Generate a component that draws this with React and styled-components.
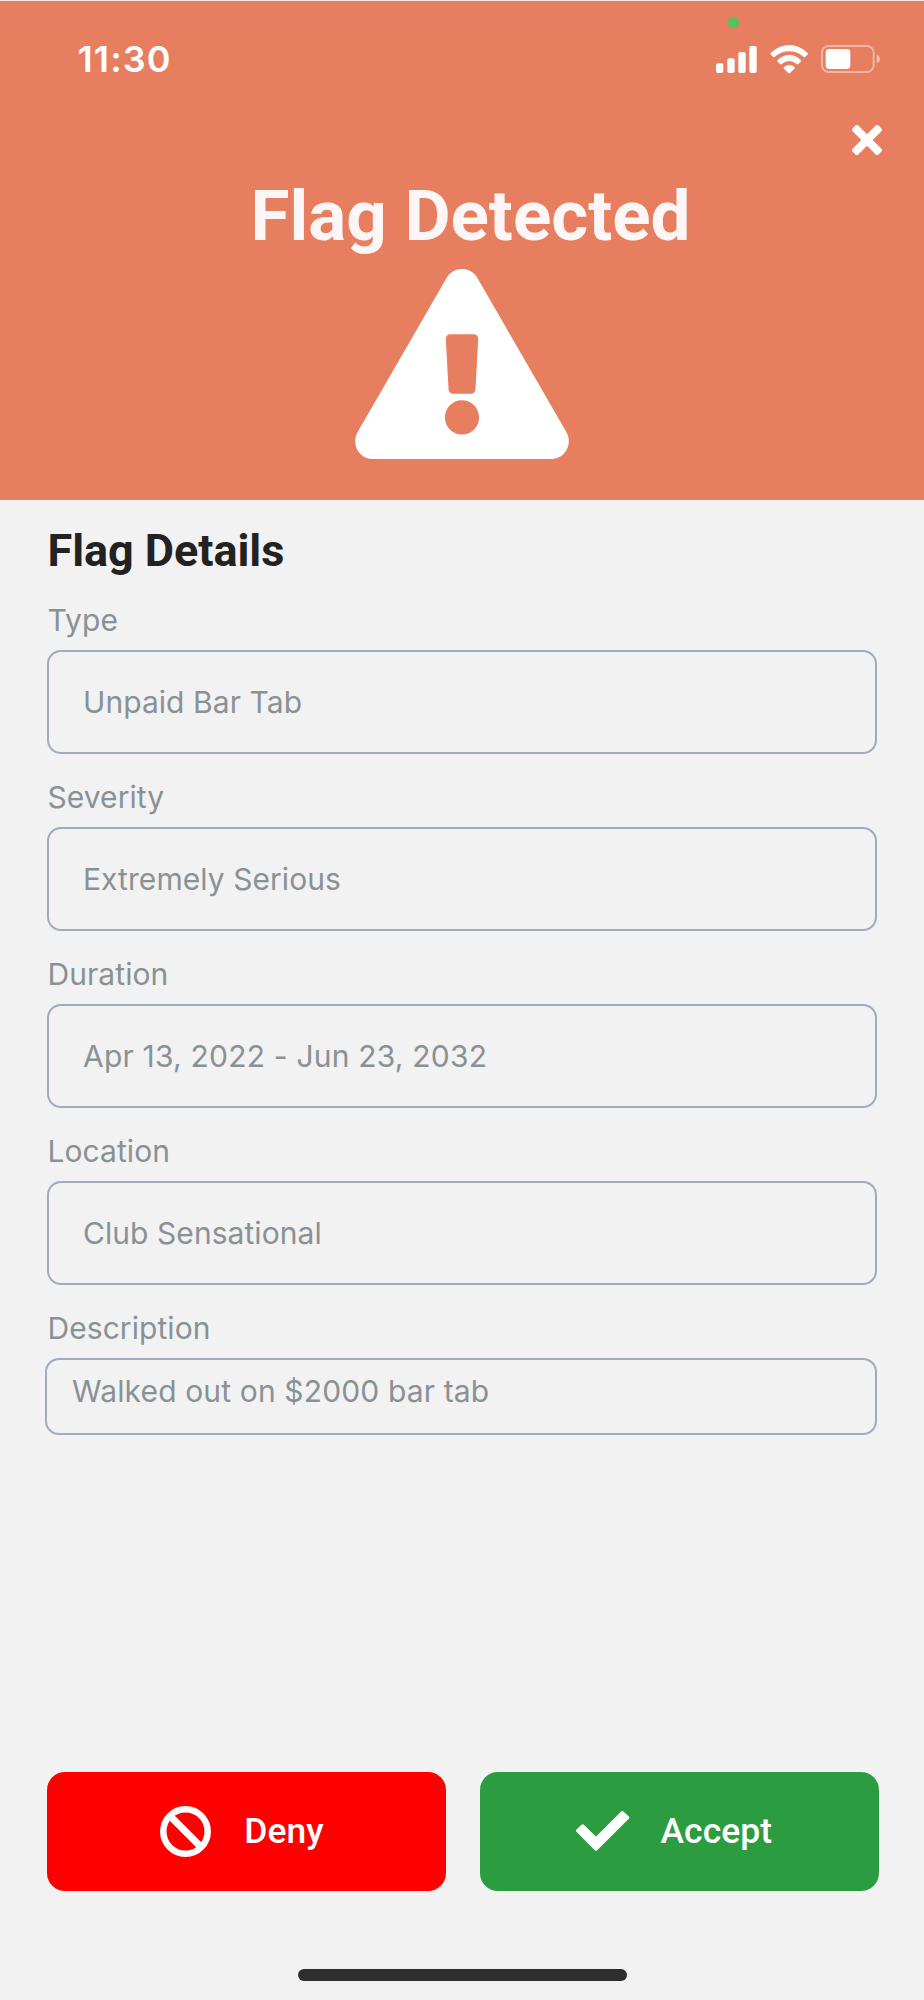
import React from "react";
import styled, { createGlobalStyle } from "styled-components";
import { FaExclamationTriangle } from "react-icons/fa";

const details = [
  { label: "Type", value: "Unpaid Bar Tab" },
  { label: "Severity", value: "Extremely Serious" },
  {
    label: "Duration",
    value: "Apr 13, 2022 - Jun 23, 2032",
    tracking: "0.2px",
  },
  { label: "Location", value: "Club Sensational" },
];

const SignalIcon = () => (
  <svg width="41" height="27" viewBox="0 0 123 81" fill="#fff">
    <rect x="0" y="52" width="22" height="29" rx="6" />
    <rect x="34" y="37" width="22" height="44" rx="6" />
    <rect x="67" y="18" width="22" height="63" rx="6" />
    <rect x="100" y="0" width="22" height="81" rx="6" />
  </svg>
);

const WifiIcon = () => (
  <svg width="38.4" height="28.4" viewBox="0 0 115 85" fill="#fff">
    <path d="M3 23Q0 26 3 29L10 36Q12 38 15 35Q34 19 57.500 19T100 35Q103 38 105 36L112 29Q115 26 112 23Q88 0 57.500 0T3 23Z" />
    <path d="M23 45Q20 48 23 50L30 57Q33 59 36 56Q46 48 57.500 48T79 56Q82 59 85 57L92 50Q95 48 92 45Q77 30 57.500 30T23 45Z" />
    <path d="M43 65Q39 68 42 71L55 84Q57.500 86 60 84L73 71Q76 68 72 65Q66 60 57.500 60T43 65Z" />
  </svg>
);

const BatteryIcon = () => (
  <svg width="59" height="28" viewBox="0 0 177 84">
    <rect
      x="3"
      y="3"
      width="155"
      height="78"
      rx="20"
      fill="none"
      stroke="#fff"
      strokeOpacity="0.42"
      strokeWidth="6"
    />
    <rect x="14" y="12" width="74" height="60" rx="11" fill="#fff" />
    <path d="M167 29Q177 33 177 42T167 55Z" fill="#fff" fillOpacity="0.5" />
  </svg>
);

const CloseIcon = () => (
  <svg width="30" height="30" viewBox="-45 -45 90 90" fill="#fff">
    <rect x="-55" y="-12" width="110" height="24" rx="6" transform="rotate(45)" />
    <rect x="-55" y="-12" width="110" height="24" rx="6" transform="rotate(-45)" />
  </svg>
);

const DenyIcon = () => (
  <svg width="51" height="51" viewBox="0 0 51 51" fill="none" stroke="#fff">
    <circle cx="25.500" cy="25.500" r="22.200" strokeWidth="6.500" />
    <path d="M10 10L41 41" strokeWidth="7" />
  </svg>
);

const CheckIcon = () => (
  <svg width="53.300" height="39.700" viewBox="0 0 160 119">
    <path
      d="M20 45L5 59L60 114L155 20L139 5L60 84Z"
      fill="#fff"
      stroke="#fff"
      strokeWidth="10"
      strokeLinejoin="round"
    />
  </svg>
);

const App = () => {
  return (
    <>
      <GlobalStyle />
      <Screen>
        <Header>
          <StatusBar>
            <RecordingDot />
            <Time>11:30</Time>
            <StatusIcons>
              <SignalIcon />
              <WifiIcon />
              <BatteryIcon />
            </StatusIcons>
          </StatusBar>
          <CloseButton aria-label="Close">
            <CloseIcon />
          </CloseButton>
          <Title>Flag Detected</Title>
          <WarningIcon />
        </Header>
        <Details>
          <Subtitle>Flag Details</Subtitle>
          {details.map(({ label, value, tracking }) => (
            <Field key={label}>
              <Label>{label}</Label>
              <Value $tracking={tracking}>{value}</Value>
            </Field>
          ))}
          <Field>
            <Label>Description</Label>
            <Description $tracking="0.14px">
              Walked out on $2000 bar tab
            </Description>
          </Field>
        </Details>
        <Actions>
          <ActionButton $color="#ff0000" $gap="33.500px" $shift="9.500px">
            <DenyIcon />
            <span>Deny</span>
          </ActionButton>
          <ActionButton $color="#2b9c40" $gap="31px" $shift="10px">
            <CheckIcon />
            <span>Accept</span>
          </ActionButton>
        </Actions>
        <HomeIndicator />
      </Screen>
    </>
  );
};

const GlobalStyle = createGlobalStyle`
  * {
    box-sizing: border-box;
  }
  body {
    margin: 0;
    background: #f2f2f2;
  }
  svg {
    display: block;
    flex-shrink: 0;
  }
`;

const Screen = styled.main`
  display: flex;
  flex-direction: column;
  width: 924px;
  height: 2000px;
  background: #f2f2f2;
  font-family: Inter, "Liberation Sans", sans-serif;
`;

const Header = styled.header`
  display: flex;
  flex-direction: column;
  align-items: center;
  height: 500px;
  border-top: 1px solid #f5ece8;
  background: #e67e5f;
`;

const StatusBar = styled.div`
  position: relative;
  display: flex;
  justify-content: space-between;
  align-items: center;
  width: 100%;
  height: 117px;
  padding: 0 44px 0 77.500px;
`;

const RecordingDot = styled.span`
  position: absolute;
  top: 16px;
  left: 728px;
  width: 11px;
  height: 11px;
  border-radius: 50%;
  background: #55c35c;
`;

const Time = styled.span`
  margin-bottom: 1px;
  color: #fff;
  font-size: 36px;
  font-weight: 560;
  letter-spacing: 1.1px;
  line-height: 42px;
`;

const StatusIcons = styled.div`
  display: flex;
  align-items: center;
  gap: 12.800px;
`;

const CloseButton = styled.button`
  align-self: flex-end;
  margin: 7px 42px 0 0;
  padding: 0;
  border: 0;
  background: none;
`;

const Title = styled.h1`
  margin: 19px 0 0 17px;
  color: #fcf7f6;
  font-family: Roboto, sans-serif;
  font-size: 71px;
  font-weight: 700;
  line-height: 84px;
`;

const WarningIcon = styled(FaExclamationTriangle)`
  width: 214px;
  height: 190px;
  margin-top: 11px;
  color: #fff;
`;

const Details = styled.section`
  height: 1272px;
  padding: 24px 47px 0;
`;

const Subtitle = styled.h2`
  margin: 0 0 24px 0.5px;
  color: #222;
  font-family: Roboto, sans-serif;
  font-size: 45px;
  font-weight: 700;
  letter-spacing: -0.05px;
  line-height: 54px;
`;

const Field = styled.div`
  height: 177px;
`;

const Label = styled.div`
  margin: 0 0 12px 0.5px;
  color: #899194;
  font-size: 30px;
  letter-spacing: 0.06px;
  line-height: 36px;
`;

const Value = styled.div`
  display: flex;
  align-items: center;
  height: 104px;
  padding-left: 34px;
  border: 2px solid #a0abbc;
  border-radius: 14px;
  color: #899194;
  font-size: 30px;
  letter-spacing: ${({ $tracking }) => $tracking || "0.06px"};
`;

const Description = styled(Value)`
  align-items: flex-start;
  height: 77px;
  margin-left: -2px;
  padding: 13px 0 0 25px;
  line-height: 36px;
`;

const Actions = styled.div`
  display: grid;
  grid-template-columns: 1fr 1fr;
  gap: 34px;
  padding: 0 45.500px 0 47px;
`;

const ActionButton = styled.button`
  display: flex;
  justify-content: center;
  align-items: center;
  gap: ${({ $gap }) => $gap};
  height: 118.500px;
  padding: 0 ${({ $shift }) => $shift} 0 0;
  border: 0;
  border-radius: 18px;
  background: ${({ $color }) => $color};
  color: #fff;
  font-family: Roboto, sans-serif;
  font-size: 35.500px;
  font-weight: 500;

  span {
    margin-bottom: 1px;
  }
`;

const HomeIndicator = styled.div`
  width: 329px;
  height: 12px;
  margin: 78.500px auto 0;
  border-radius: 6px;
  background: #2e2e2e;
`;

export default App;
